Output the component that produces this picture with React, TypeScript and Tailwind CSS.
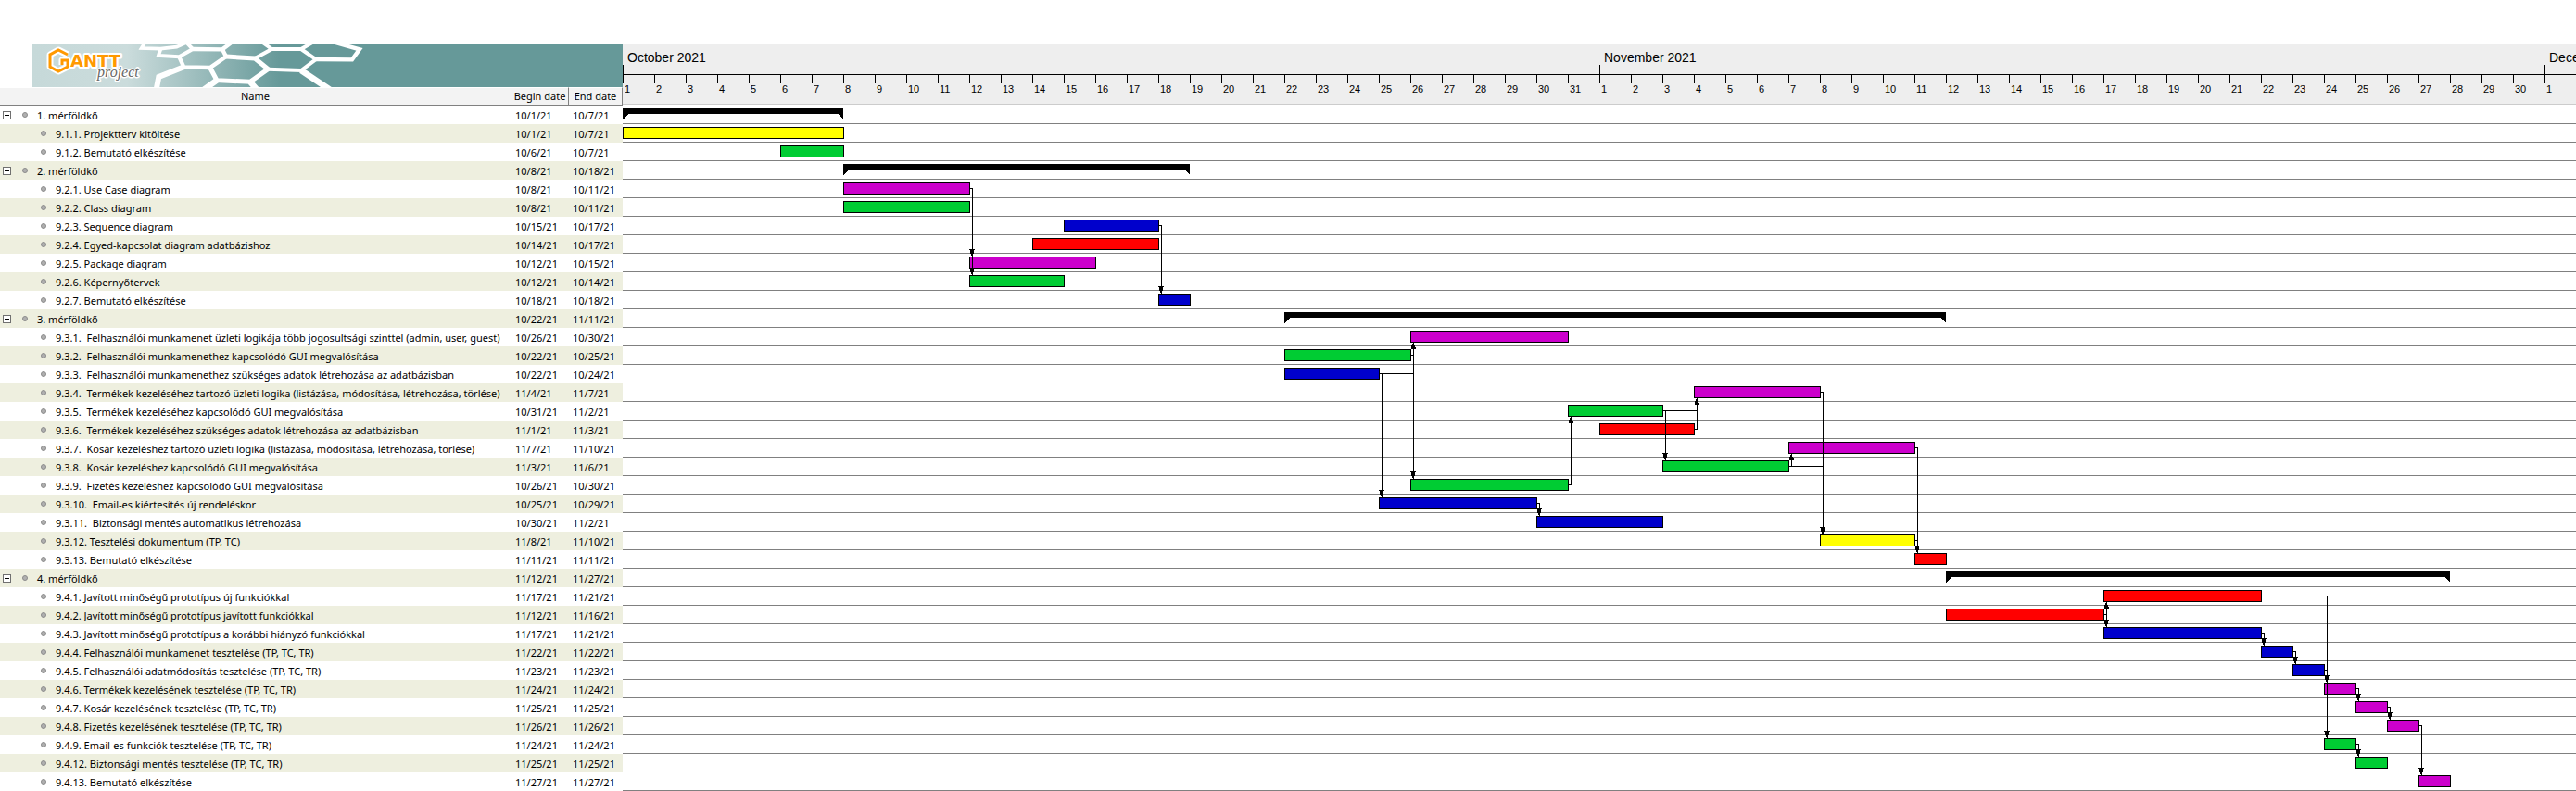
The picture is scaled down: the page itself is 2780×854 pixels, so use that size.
import React from "react";

type Kind = "summary" | "yellow" | "green" | "purple" | "blue" | "red";
type Task = { name: string; begin: string; end: string; kind: Kind };

const DAY = 34;
const ROW = 20;

const FILL: Record<Kind, string> = {
  summary: "#000000",
  yellow: "#ffff00",
  green: "#00cc33",
  purple: "#cc00cc",
  blue: "#0000cc",
  red: "#ff0000",
};

const t = (name: string, begin: string, end: string, kind: Kind): Task => ({ name, begin, end, kind });

const tasks: Task[] = [
  t("1. mérföldkő", "10/1/21", "10/7/21", "summary"),
  t("9.1.1. Projektterv kitöltése", "10/1/21", "10/7/21", "yellow"),
  t("9.1.2. Bemutató elkészítése", "10/6/21", "10/7/21", "green"),
  t("2. mérföldkő", "10/8/21", "10/18/21", "summary"),
  t("9.2.1. Use Case diagram", "10/8/21", "10/11/21", "purple"),
  t("9.2.2. Class diagram", "10/8/21", "10/11/21", "green"),
  t("9.2.3. Sequence diagram", "10/15/21", "10/17/21", "blue"),
  t("9.2.4. Egyed-kapcsolat diagram adatbázishoz", "10/14/21", "10/17/21", "red"),
  t("9.2.5. Package diagram", "10/12/21", "10/15/21", "purple"),
  t("9.2.6. Képernyőtervek", "10/12/21", "10/14/21", "green"),
  t("9.2.7. Bemutató elkészítése", "10/18/21", "10/18/21", "blue"),
  t("3. mérföldkő", "10/22/21", "11/11/21", "summary"),
  t("9.3.1.  Felhasználói munkamenet üzleti logikája több jogosultsági szinttel (admin, user, guest)", "10/26/21", "10/30/21", "purple"),
  t("9.3.2.  Felhasználói munkamenethez kapcsolódó GUI megvalósítása", "10/22/21", "10/25/21", "green"),
  t("9.3.3.  Felhasználói munkamenethez szükséges adatok létrehozása az adatbázisban", "10/22/21", "10/24/21", "blue"),
  t("9.3.4.  Termékek kezeléséhez tartozó üzleti logika (listázása, módosítása, létrehozása, törlése)", "11/4/21", "11/7/21", "purple"),
  t("9.3.5.  Termékek kezeléséhez kapcsolódó GUI megvalósítása", "10/31/21", "11/2/21", "green"),
  t("9.3.6.  Termékek kezeléséhez szükséges adatok létrehozása az adatbázisban", "11/1/21", "11/3/21", "red"),
  t("9.3.7.  Kosár kezeléshez tartozó üzleti logika (listázása, módosítása, létrehozása, törlése)", "11/7/21", "11/10/21", "purple"),
  t("9.3.8.  Kosár kezeléshez kapcsolódó GUI megvalósítása", "11/3/21", "11/6/21", "green"),
  t("9.3.9.  Fizetés kezeléshez kapcsolódó GUI megvalósítása", "10/26/21", "10/30/21", "green"),
  t("9.3.10.  Email-es kiértesítés új rendeléskor", "10/25/21", "10/29/21", "blue"),
  t("9.3.11.  Biztonsági mentés automatikus létrehozása", "10/30/21", "11/2/21", "blue"),
  t("9.3.12. Tesztelési dokumentum (TP, TC)", "11/8/21", "11/10/21", "yellow"),
  t("9.3.13. Bemutató elkészítése", "11/11/21", "11/11/21", "red"),
  t("4. mérföldkő", "11/12/21", "11/27/21", "summary"),
  t("9.4.1. Javított minőségű prototípus új funkciókkal", "11/17/21", "11/21/21", "red"),
  t("9.4.2. Javított minőségű prototípus javított funkciókkal", "11/12/21", "11/16/21", "red"),
  t("9.4.3. Javított minőségű prototípus a korábbi hiányzó funkciókkal", "11/17/21", "11/21/21", "blue"),
  t("9.4.4. Felhasználói munkamenet tesztelése (TP, TC, TR)", "11/22/21", "11/22/21", "blue"),
  t("9.4.5. Felhasználói adatmódosítás tesztelése (TP, TC, TR)", "11/23/21", "11/23/21", "blue"),
  t("9.4.6. Termékek kezelésének tesztelése (TP, TC, TR)", "11/24/21", "11/24/21", "purple"),
  t("9.4.7. Kosár kezelésének tesztelése (TP, TC, TR)", "11/25/21", "11/25/21", "purple"),
  t("9.4.8. Fizetés kezelésének tesztelése (TP, TC, TR)", "11/26/21", "11/26/21", "purple"),
  t("9.4.9. Email-es funkciók tesztelése (TP, TC, TR)", "11/24/21", "11/24/21", "green"),
  t("9.4.12. Biztonsági mentés tesztelése (TP, TC, TR)", "11/25/21", "11/25/21", "green"),
  t("9.4.13. Bemutató elkészítése", "11/27/21", "11/27/21", "purple"),
];

// Pairs of row indexes: predecessor, successor
const links: [number, number][] = [
  [4, 8], [5, 9], [6, 10], [13, 12], [14, 12], [13, 20], [14, 21], [20, 16],
  [21, 22], [16, 15], [17, 15], [16, 19], [19, 18], [15, 23], [19, 23],
  [18, 24], [23, 24], [27, 26], [27, 28], [28, 29], [29, 30], [30, 31],
  [26, 34], [31, 32], [32, 33], [33, 36], [34, 35],
];

const months = [
  { label: "October 2021", days: 31 },
  { label: "November 2021", days: 30 },
  { label: "December 2021", days: 1 },
];

/** Days since the first of October. */
function dayOffset(date: string): number {
  const [month, day] = date.split("/").map(Number);
  return (month === 11 ? 31 : 0) + day - 1;
}

const startX = (task: Task) => dayOffset(task.begin) * DAY;
const endX = (task: Task) => (dayOffset(task.end) + 1) * DAY;

function Bar({ task, row }: { task: Task; row: number }) {
  const x = startX(task);
  const r = endX(task);
  const y = row * ROW + 3;
  if (task.kind === "summary") {
    return <path d={`M${x} ${y}H${r}V${y + 12}L${r - 6} ${y + 6}H${x + 6}L${x} ${y + 12}Z`} />;
  }
  return (
    <g>
      <rect x={x} y={y} width={r - x + 1} height={13} />
      <rect x={x + 1} y={y + 1} width={r - x - 1} height={11} fill={FILL[task.kind]} />
    </g>
  );
}

function Link({ from, to }: { from: number; to: number }) {
  const x0 = endX(tasks[from]);
  const x = startX(tasks[to]) + 3;
  const y0 = from * ROW + 9;
  const down = to > from;
  const y1 = down ? to * ROW + 3 : to * ROW + 16;
  return (
    <g>
      <rect x={x0} y={y0} width={x - x0 + 1} height={1} />
      <rect x={x} y={Math.min(y0, y1)} width={1} height={Math.abs(y1 - y0)} />
      {down ? (
        <path d={`M${x - 3} ${y1 - 8}h6v1h-1v4h-1v2h-2v-2h-1v-4h-1z`} />
      ) : (
        <path d={`M${x - 1} ${y1 + 1}h2v2h1v2h1v2h-5v-2h0v-2h1z`} />
      )}
    </g>
  );
}

function Banner() {
  return (
    <svg
      className="block h-[47px] w-[637px]"
      viewBox="0 0 637 47"
      role="img"
      aria-label="GanttProject"
    >
      <defs>
        <linearGradient id="sky" x1="0" x2="637" y1="0" y2="0" gradientUnits="userSpaceOnUse">
          <stop offset="0" stopColor="#c6d9d9" />
          <stop offset="0.16" stopColor="#cbdcdc" />
          <stop offset="0.42" stopColor="#669999" />
          <stop offset="1" stopColor="#669999" />
        </linearGradient>
      </defs>
      <rect width="637" height="47" fill="url(#sky)" />
      <g
        transform="translate(195 -3) scale(0.3333)"
        fill="none"
        stroke="#ffffff"
        strokeWidth="15"
        strokeLinejoin="miter"
      >
        <path d="M-220 4L-232 24L-170 26L-118 20L-82 4" strokeWidth="11" />
        <path d="M-170 26L-177 48L-110 52L-66 27L-88 4" strokeWidth="12" />
        <path d="M-66 27L30 28L62 4M30 28L42 51L-10 87L-95 85L-110 52" strokeWidth="13" />
        <path d="M-95 85L-176 117L-184 158" strokeWidth="18" />
        <path d="M-10 87L12 128L120 133L178 92L135 57L42 51" strokeWidth="15" />
        <path d="M12 128L-30 158M120 133L142 158" strokeWidth="19" />
        <path d="M135 57L190 27L285 27L333 60L285 96L178 92M190 27L158 4M285 27L325 4" strokeWidth="12" />
        <path d="M285 96L378 158" strokeWidth="20" />
        <path d="M333 60L450 61L474 28L395 6" strokeWidth="13" />
      </g>
      <g fill="#ffffff">
        <ellipse cx="560" cy="0" rx="9" ry="1" />
        <ellipse cx="630" cy="0" rx="11" ry="1" />
      </g>
      <g strokeLinejoin="round">
        <path
          d="M38 12L28 7L19 12V25L28 30L38 25V18H32V23"
          fill="none"
          stroke="#ffffff"
          strokeWidth="7"
        />
        <text
          x="41"
          y="25"
          fontFamily="DejaVu Sans"
          fontWeight="bold"
          fontSize="18"
          fill="#ff9900"
          stroke="#ffffff"
          strokeWidth="4"
          paintOrder="stroke"
        >
          ANTT
        </text>
        <path
          d="M38 12L28 7L19 12V25L28 30L38 25V18H32V23"
          fill="none"
          stroke="#ff9900"
          strokeWidth="3"
          strokeLinejoin="miter"
        />
        <text
          x="70"
          y="36"
          fontFamily="Liberation Serif"
          fontStyle="italic"
          fontSize="16"
          fill="#666666"
          stroke="#ffffff"
          strokeWidth="3"
          paintOrder="stroke"
        >
          project
        </text>
      </g>
    </svg>
  );
}

function TaskTable() {
  const head =
    "border-b border-r border-t border-[#808080] border-t-white bg-[#f3f3f3] p-0 text-center font-normal leading-[18px]";
  return (
    <table className="w-full table-fixed border-separate border-spacing-0 text-[11px] leading-[19px] text-black">
      <colgroup>
        <col />
        <col className="w-[62px]" />
        <col className="w-[58px]" />
      </colgroup>
      <thead>
        <tr className="h-5">
          <th className={head}>Name</th>
          <th className={head}>Begin date</th>
          <th className={head}>End date</th>
        </tr>
      </thead>
      <tbody>
        {tasks.map((task) => {
          const summary = task.kind === "summary";
          return (
            <tr key={task.name} className="h-5 even:bg-[#eeefdf]">
              <td className="p-0">
                <div className={summary ? "flex items-center pl-[3px]" : "flex items-center pl-11"}>
                  {summary && (
                    <button
                      type="button"
                      aria-label={`Collapse ${task.name}`}
                      className="mr-3 flex size-[9px] items-center justify-center border border-[#707070] bg-white"
                    >
                      <span className="h-px w-[5px] bg-black" />
                    </button>
                  )}
                  <span className="mr-2.5 size-1.5 shrink-0 rounded-full border border-[#8c8c8c] bg-[#b0b0b0]" />
                  <span className="whitespace-pre">{task.name}</span>
                </div>
              </td>
              <td className="p-0 pl-1">{task.begin}</td>
              <td className="p-0 pl-1">{task.end}</td>
            </tr>
          );
        })}
      </tbody>
    </table>
  );
}

function Timeline() {
  return (
    <div className="mb-px flex h-[66px] overflow-hidden border-b border-[#cccccc] bg-[#eeeeee] font-['Liberation_Sans',sans-serif] text-black">
      {months.map((month) => (
        <div key={month.label} className="shrink-0 last:grow">
          <div className="h-[23px] whitespace-nowrap pl-[5px] pt-1.5 text-sm leading-[18px]">{month.label}</div>
          <div className="h-2.5 border-l border-black" />
          <div className="flex border-t border-black">
            {Array.from({ length: month.days }, (_, i) => (
              <div key={i} className="w-[34px] shrink-0 text-[11px] leading-3">
                <div className="h-[9px] w-px bg-black" />
                <div className="pl-0.5">{i + 1}</div>
              </div>
            ))}
          </div>
        </div>
      ))}
    </div>
  );
}

function Chart() {
  return (
    <div className="relative overflow-hidden">
      {tasks.map((task) => (
        <div key={task.name} className="h-5 border-b border-[#808080]" />
      ))}
      <svg
        className="absolute left-0 top-0 h-full w-[2108px] max-w-none"
        shapeRendering="crispEdges"
        role="img"
        aria-label="Task bars and dependencies"
      >
        {tasks.map((task, row) => (
          <Bar key={task.name} task={task} row={row} />
        ))}
        {links.map(([from, to]) => (
          <Link key={`${from}-${to}`} from={from} to={to} />
        ))}
      </svg>
    </div>
  );
}

export default function App() {
  return (
    <main className="flex min-h-screen items-start overflow-hidden bg-white pt-[47px] font-['Noto_Sans','Open_Sans',sans-serif]">
      <section className="w-[672px] shrink-0">
        <div className="pl-[35px]">
          <Banner />
        </div>
        <TaskTable />
      </section>
      <section className="min-w-0 flex-1">
        <Timeline />
        <Chart />
      </section>
    </main>
  );
}
